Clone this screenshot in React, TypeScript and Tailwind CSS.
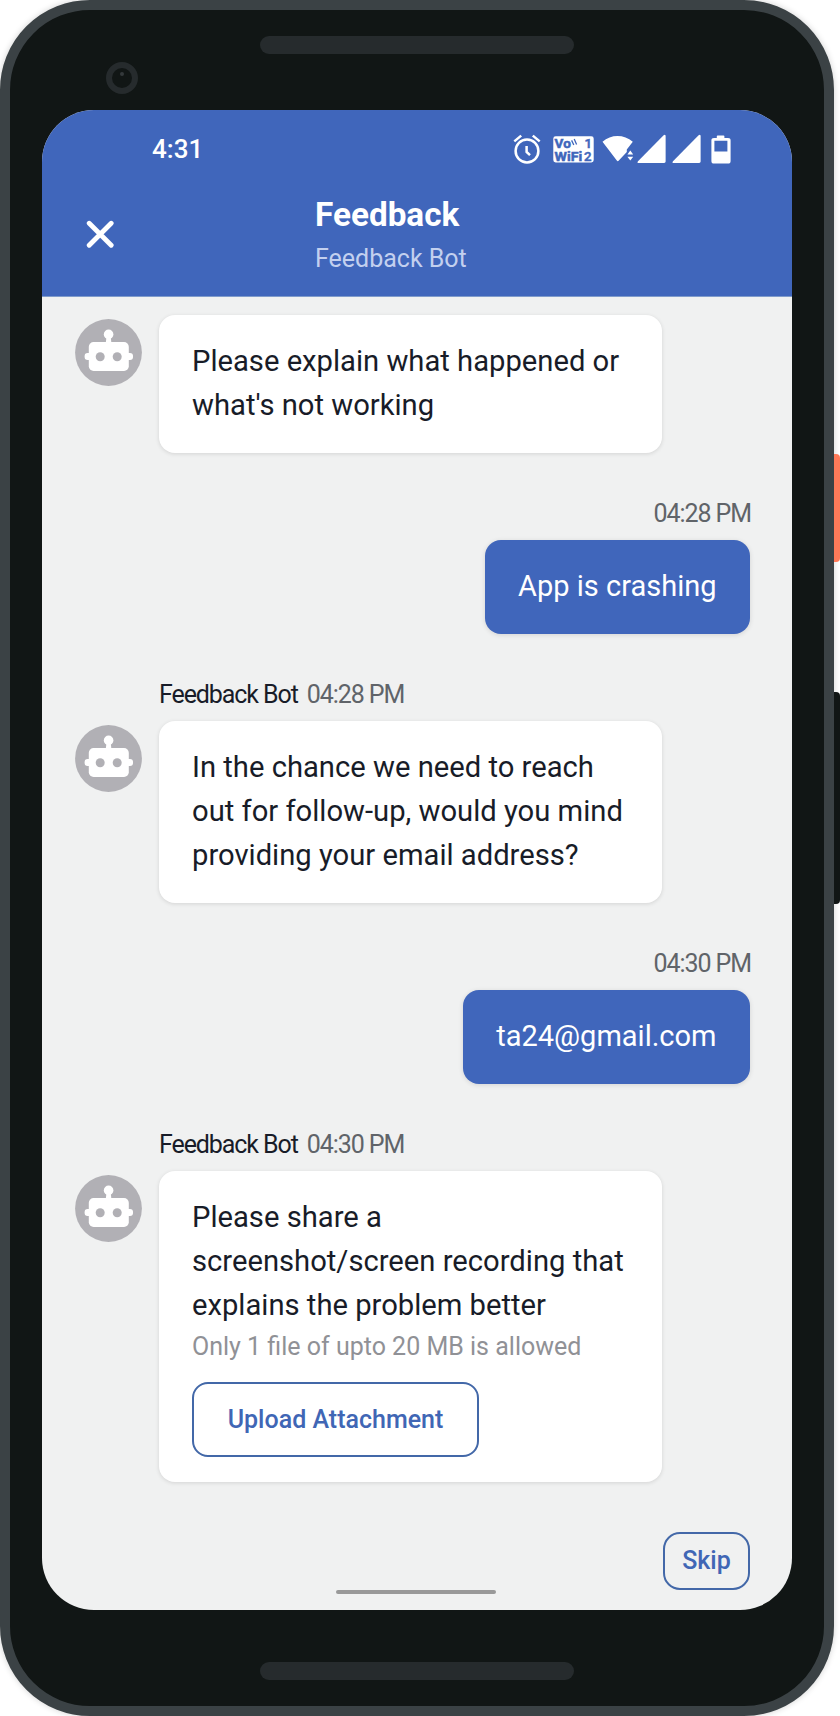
import type { ReactNode } from "react";

function AlarmIcon() {
  return (
    <svg width="28" height="30" viewBox="0 0 28 30" fill="none" stroke="#fff" strokeWidth="2.5">
      <circle cx="14" cy="17" r="11.4" />
      <path d="M1.3 7.4 8.2 1.6M26.7 7.4 19.8 1.6" />
      <path d="M13.6 12v6l3.4 3.2" />
    </svg>
  );
}

function VoWifiIcon() {
  return (
    <svg width="41" height="27" viewBox="0 0 41 27">
      <rect x="0.3" y="0.3" width="40.4" height="26.2" rx="2.4" fill="#fff" />
      <g fill="#4066bb" stroke="#4066bb" strokeWidth="0.5" fontFamily="Roboto, sans-serif" fontWeight="700" fontSize="13.2">
        <text x="1.6" y="12" textLength="16.2" lengthAdjust="spacingAndGlyphs">Vo</text>
        <text x="31.4" y="12" fontWeight="500">1</text>
        <text x="1.6" y="25" textLength="27.6" lengthAdjust="spacingAndGlyphs">WiFi</text>
        <text x="30.9" y="25" fontWeight="500">2</text>
      </g>
      <path d="M18.6 4.4l2.2 4.6M21.2 3l2.4 5.4" stroke="#4066bb" strokeWidth="1.3" fill="none" />
    </svg>
  );
}

function WifiIcon() {
  return (
    <svg width="32" height="28" viewBox="0 0 32 28" fill="#fff">
      <path d="M0.5 6.8C9 -1 22 -1 30.8 6.8L24.8 14.4V17L16.8 25.6Q15.8 26.8 14.8 25.6Z" />
      <path d="M25.4 19.4 28.3 15.6 31.2 19.4ZM25.4 21.8H31.2L28.3 25.6Z" />
    </svg>
  );
}

function SignalIcon() {
  return (
    <svg width="29" height="30" viewBox="0 0 29 30" fill="#fff">
      <path d="M1 27.2 26.6 1.2Q28.6 0 28.6 2V27.6Q28.6 29 27.2 29H1.4Q-0.4 28.8 1 27.2Z" />
    </svg>
  );
}

function BatteryIcon() {
  return (
    <svg width="20" height="29" viewBox="0 0 20 29" fill="#fff" fillRule="evenodd">
      <path d="M6.6 0.4H12.6Q13.4 0.4 13.4 1.2V3H17Q19.6 3 19.6 5.4V26Q19.6 28.6 17 28.6H3Q0.4 28.6 0.4 26V5.4Q0.4 3 3 3H5.8V1.2Q5.8 0.4 6.6 0.4ZM3.4 5.8V16.4H16.4V5.8Z" />
    </svg>
  );
}

function BotAvatar() {
  return (
    <svg className="mt-[4px] size-[67px] shrink-0" viewBox="0 0 67 67">
      <circle cx="33.5" cy="33.5" r="33.4" fill="#b1b0b5" />
      <g fill="#fff">
        <circle cx="33.6" cy="15.4" r="4.8" />
        <path d="M31.6 17h4l.8 7h-5.6z" />
        <rect x="13.8" y="23" width="40" height="29" rx="4.8" />
        <rect x="9.6" y="34" width="48.4" height="7" rx="3" />
      </g>
      <circle cx="25.2" cy="37.8" r="4.5" fill="#b1b0b5" />
      <circle cx="42.2" cy="37.8" r="4.5" fill="#b1b0b5" />
    </svg>
  );
}

function Label({ name, time }: { name?: string; time: string }) {
  return (
    <div className="flex h-[87.5px] items-end gap-[9px] pb-[11px] text-[25px] leading-[30px] tracking-[-1.08px] text-[#606469]">
      {name && <span className="text-[#181c28]">{name}</span>}
      <span>{time}</span>
    </div>
  );
}

function BotMessage({ time, children }: { time?: string; children: ReactNode }) {
  return (
    <div className="flex flex-col">
      {time && (
        <div className="pl-[84px]">
          <Label name="Feedback Bot" time={time} />
        </div>
      )}
      <div className="flex gap-[17px]">
        <BotAvatar />
        <div className="w-[502.5px] rounded-[16px] bg-white px-[33px] py-[25px] text-[29.2px] leading-[43.75px] text-[#181c28] shadow-[0_1px_4px_rgba(0,0,0,0.12)]">
          {children}
        </div>
      </div>
    </div>
  );
}

function UserMessage({ time, children }: { time: string; children: ReactNode }) {
  return (
    <div className="flex flex-col items-end">
      <div className="-mr-px">
        <Label time={time} />
      </div>
      <div className="rounded-[16px] bg-[#4066bb] px-[33.5px] py-[25px] text-[29px] leading-[43.75px] whitespace-nowrap text-white shadow-[0_1px_5px_rgba(0,0,0,0.12)]">
        {children}
      </div>
    </div>
  );
}

export default function App() {
  return (
    <div className="flex h-[1716px] w-[840px] overflow-hidden bg-white font-['Roboto',sans-serif]">
      <div className="flex w-[834px] shrink-0 flex-col items-center rounded-[90px] border-[10px] border-[#3b4245] bg-[#111615] shadow-[0_0_6px_rgba(0,0,0,0.18)]">
        <div className="flex h-[100px] w-full shrink-0 justify-center pt-[26px]">
          <div className="mt-[26px] ml-[96px] flex size-[32px] justify-center rounded-full border-[6px] border-[#262b2d] pt-[4px]">
            <span className="size-[4px] rounded-full bg-[#34393b]" />
          </div>
          <div className="ml-[122px] h-[18px] w-[314px] rounded-full bg-[#262b2d]" />
          <div className="flex-1" />
        </div>

        <div className="flex h-[1500px] w-[750px] shrink-0 flex-col overflow-hidden rounded-[52px] bg-[#f0f1f1]">
          <header className="flex h-[187px] shrink-0 flex-col border-b border-[#7f9bcb] bg-[#4066bb] text-white">
            <div className="flex h-[78px] items-center pl-[110px]">
              <span className="w-[361px] text-[26px] font-medium">4:31</span>
              <AlarmIcon />
              <span className="ml-[12px]"><VoWifiIcon /></span>
              <span className="ml-[8px]"><WifiIcon /></span>
              <span className="ml-[3px]"><SignalIcon /></span>
              <span className="ml-[6px]"><SignalIcon /></span>
              <span className="ml-[10px]"><BatteryIcon /></span>
            </div>
            <div className="flex">
              <svg className="mt-[32px] ml-[44px] size-[28px]" viewBox="0 0 28 28" stroke="#fff" strokeWidth="4.8" strokeLinecap="round">
                <path d="M3.2 3.2 25.2 25.2M25.2 3.2 3.2 25.2" />
              </svg>
              <div className="ml-[201px] flex flex-col">
                <h1 className="mt-[7px] text-[33.3px] leading-[40px] font-bold">Feedback</h1>
                <p className="mt-[9px] text-[25px] leading-[30px] text-[#c3d0ef]">Feedback Bot</p>
              </div>
            </div>
          </header>

          <main className="flex flex-1 flex-col pt-[18px] pr-[42px] pl-[33px]">
            <BotMessage>
              Please explain what happened or
              <br />
              what's not working
            </BotMessage>
            <UserMessage time="04:28 PM">App is crashing</UserMessage>
            <BotMessage time="04:28 PM">
              In the chance we need to reach
              <br />
              out for follow-up, would you mind
              <br />
              providing your email address?
            </BotMessage>
            <UserMessage time="04:30 PM">ta24@gmail.com</UserMessage>
            <BotMessage time="04:30 PM">
              <p>
                Please share a
                <br />
                screenshot/screen recording that
                <br />
                explains the problem better
              </p>
              <p className="mt-[4px] text-[25px] leading-[30px] text-[#909196]">Only 1 file of upto 20 MB is allowed</p>
              <button className="mt-[20px] flex h-[75px] w-[287px] items-center justify-center rounded-[16px] border-2 border-[#4368a8] pt-px text-[25px] font-medium text-[#4066b5]">
                Upload Attachment
              </button>
            </BotMessage>
            <button className="mt-[50px] flex h-[58px] w-[87px] items-center justify-center self-end rounded-[17px] border-2 border-[#4368a8] pt-px text-[25px] font-medium text-[#4066b5]">
              Skip
            </button>
            <div className="ml-[261px] h-[4px] w-[160px] rounded-full bg-[#999]" />
          </main>
        </div>

        <div className="mt-[52px] h-[18px] w-[314px] rounded-full bg-[#262b2d]" />
      </div>

      <div className="flex w-[6px] shrink-0 flex-col pt-[454px]">
        <div className="h-[108px] rounded-r-[4px] bg-[#ff7a59]" />
        <div className="mt-[130px] h-[212px] rounded-r-[4px] bg-[#111615]" />
      </div>
    </div>
  );
}
